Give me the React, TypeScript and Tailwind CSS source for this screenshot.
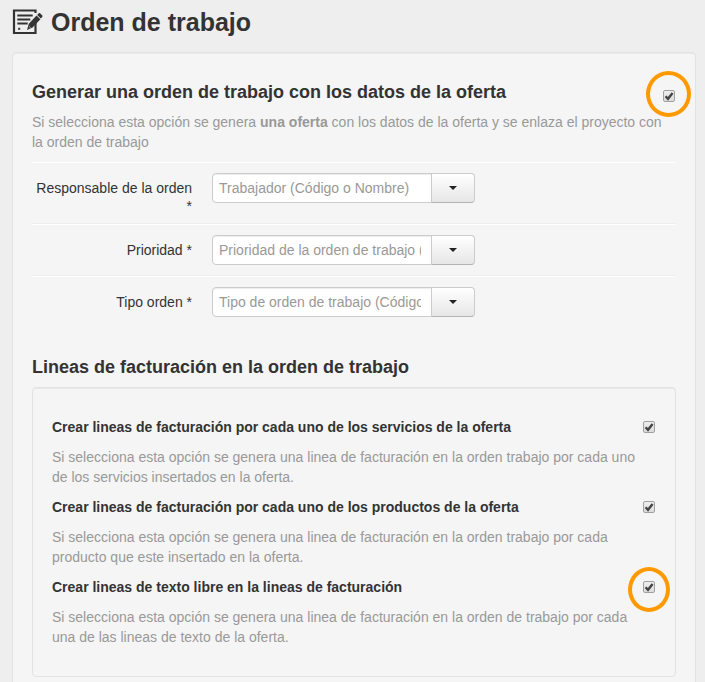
import { useState } from 'react';

const ORDER_FIELDS = [
  { id: 'responsable', label: 'Responsable de la orden *', placeholder: 'Trabajador (Código o Nombre)' },
  { id: 'prioridad', label: 'Prioridad *', placeholder: 'Prioridad de la orden de trabajo (Código)' },
  { id: 'tipo', label: 'Tipo orden *', placeholder: 'Tipo de orden de trabajo (Código)' },
];

const LINE_OPTIONS = [
  {
    id: 'servicios',
    title: 'Crear lineas de facturación por cada uno de los servicios de la oferta',
    help: 'Si selecciona esta opción se genera una linea de facturación en la orden trabajo por cada uno de los servicios insertados en la oferta.',
  },
  {
    id: 'productos',
    title: 'Crear lineas de facturación por cada uno de los productos de la oferta',
    help: 'Si selecciona esta opción se genera una linea de facturación en la orden trabajo por cada producto que este insertado en la oferta.',
  },
  {
    id: 'texto',
    title: 'Crear lineas de texto libre en la lineas de facturación',
    help: 'Si selecciona esta opción se genera una linea de facturación en la orden de trabajo por cada una de las lineas de texto de la oferta.',
    ring: '-top-3.5 -left-[15px] h-[45px] w-[42px]',
  },
];

function OrderIcon() {
  return (
    <svg width="31" height="26" viewBox="0 0 31 26" fill="none" aria-hidden="true">
      <path d="M23.5 14v10H2V1.5h21.5V4" stroke="#333" strokeWidth="2.2" />
      <path d="M5.3 6.5h15.4M5.3 10.5h13M5.3 14.5h10.4" stroke="#333" strokeWidth="1.8" />
      <path d="M6.2 18.8h2v2h-2z" fill="#333" />
      <path d="M15 21l1.8-6.2 7.7-8.2 3.9 3.7-7.8 8.2z" fill="#333" />
      <path d="M16.8 17.2l1.9 1.8" stroke="#eee" strokeWidth="0.7" />
      <path d="M25.2 5.9l1.5-1.6q.7-.6 1.4 0l2.2 2.1q.6.7 0 1.4L28.9 9.4z" fill="#333" />
    </svg>
  );
}

type CheckProps = {
  id: string;
  checked: boolean;
  onChange: () => void;
  ring?: string;
};

function Check({ id, checked, onChange, ring }: CheckProps) {
  return (
    <span className="relative mr-px flex size-3 shrink-0">
      <input
        id={id}
        type="checkbox"
        checked={checked}
        onChange={onChange}
        className="size-3 appearance-none rounded-xs border border-[#a0a0a0] bg-linear-to-b from-[#eee] to-[#dcdcdc]"
      />
      {checked && (
        <svg viewBox="0 0 12 12" className="pointer-events-none absolute inset-0 size-3" aria-hidden="true">
          <path d="M2.6 6.2l2.4 2.6L9.6 3" fill="none" stroke="#444" strokeWidth="2.4" />
        </svg>
      )}
      {ring && (
        <span className={`pointer-events-none absolute rounded-[50%] border-4 border-[#ff9900] ${ring}`} />
      )}
    </span>
  );
}

export default function App() {
  const [createOrder, setCreateOrder] = useState(true);
  const [values, setValues] = useState<Record<string, string>>({});
  const [lines, setLines] = useState<Record<string, boolean>>({
    servicios: true,
    productos: true,
    texto: true,
  });

  return (
    <main className="flex min-h-screen flex-col bg-[#eee] pr-[9px] pl-3 font-['Liberation_Sans',Arial,sans-serif] text-sm/5 text-[#333]">
      <h1 className="flex items-center gap-2 pt-0.5 text-[25px]/10 font-bold">
        <OrderIcon />
        Orden de trabajo
      </h1>

      <section className="mt-2.5 flex-1 rounded-t border border-b-0 border-[#e3e3e3] bg-[#f5f5f5] px-[19px] pt-[29px] pb-1 shadow-[inset_0_1px_1px_rgba(0,0,0,0.05)]">
        <div className="flex items-end justify-between">
          <h2 className="text-lg/5 font-bold">
            <label htmlFor="crear-orden">Generar una orden de trabajo con los datos de la oferta</label>
          </h2>
          <Check
            id="crear-orden"
            checked={createOrder}
            onChange={() => setCreateOrder(!createOrder)}
            ring="-top-[19px] -left-[17px] h-[46px] w-[45px]"
          />
        </div>
        <p className="mt-2.5 mb-2.5 text-[#999]">
          Si selecciona esta opción se genera <b>una oferta</b> con los datos de la oferta y se enlaza el proyecto con
          la orden de trabajo
        </p>

        <div>
          {ORDER_FIELDS.map((field) => (
            <div
              key={field.id}
              className="flex items-start gap-5 border-t border-white pt-2.5 pb-[9px] not-first:shadow-[0_-1px_0_#eee]"
            >
              <label htmlFor={field.id} className="w-40 pt-1.5 text-right leading-[18px]">
                {field.label}
              </label>
              <div className="flex pb-0.5">
                <input
                  id={field.id}
                  type="text"
                  value={values[field.id] ?? ''}
                  onChange={(e) => setValues({ ...values, [field.id]: e.target.value })}
                  placeholder={field.placeholder}
                  className="h-[30px] w-[220px] rounded-l border border-[#ccc] bg-white pr-2.5 pl-1.5 shadow-[inset_0_1px_1px_rgba(0,0,0,0.075)] placeholder:text-[#999]"
                />
                <button
                  type="button"
                  aria-label={`Desplegar ${field.label}`}
                  className="-ml-px flex h-[30px] w-11 items-center justify-center rounded-r border border-[#ccc] border-b-[#b3b3b3] bg-linear-to-b from-white to-[#e6e6e6]"
                >
                  <svg width="8" height="4" viewBox="0 0 8 4" aria-hidden="true">
                    <path d="M0 0h8L4 4z" fill="#222" />
                  </svg>
                </button>
              </div>
            </div>
          ))}
        </div>

        <h2 className="mt-[29px] mb-2.5 text-lg/5 font-bold">Lineas de facturación en la orden de trabajo</h2>

        <div className="rounded border border-[#e3e3e3] bg-[#f5f5f5] px-[19px] py-[29px] shadow-[inset_0_1px_1px_rgba(0,0,0,0.05)]">
          {LINE_OPTIONS.map((option) => (
            <div key={option.id} className="not-first:mt-2.5">
              <div className="flex items-center justify-between">
                <label htmlFor={option.id} className="font-bold">
                  {option.title}
                </label>
                <Check
                  id={option.id}
                  checked={lines[option.id]}
                  onChange={() => setLines({ ...lines, [option.id]: !lines[option.id] })}
                  ring={option.ring}
                />
              </div>
              <p className="mt-2.5 pr-3 text-[#999]">{option.help}</p>
            </div>
          ))}
        </div>
      </section>
    </main>
  );
}
